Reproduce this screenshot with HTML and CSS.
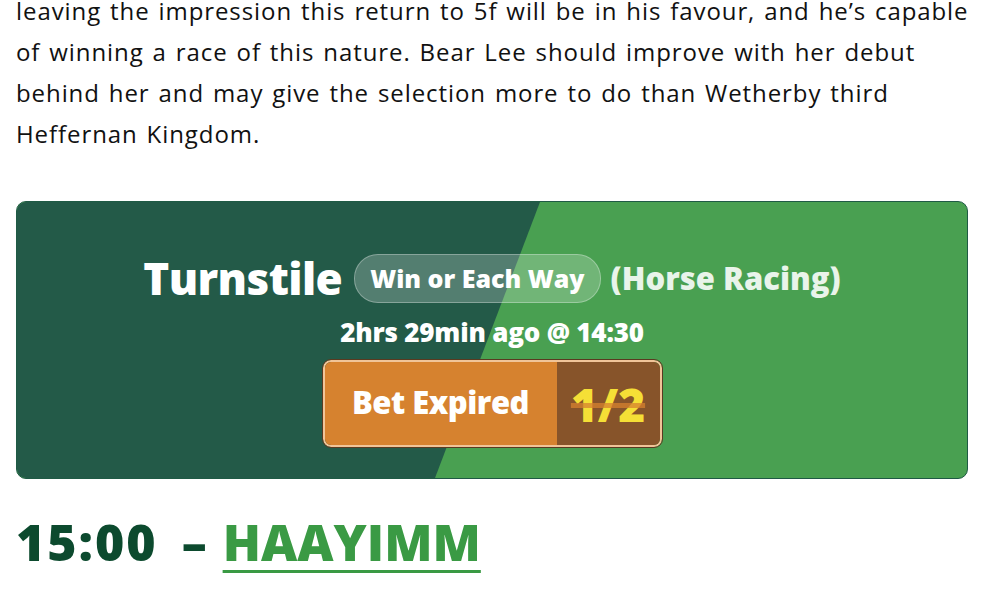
FILE: index.html
```html
<!DOCTYPE html>
<html>
<head>
<meta charset="UTF-8">
<title>15:00 - Haayimm</title>
<link rel="stylesheet" href="styles.css">
</head>
<body>
<div class="article">
	<p class="copy">leaving the impression this return to 5f will be in his favour, and he&rsquo;s capable<br>
	of winning a race of this nature. Bear Lee should improve with her debut<br>
	behind her and may give the selection more to do than Wetherby third<br>
	Heffernan Kingdom.</p>

	<!-- nap box -->
	<div class="tipbox">
		<div class="tip-title">
			<span class="horse">Turnstile</span>
			<span class="bettype">Win or Each Way</span>
			<span class="sport">(Horse Racing)</span>
		</div>
		<div class="tip-time">2hrs 29min ago @ 14:30</div>
		<div class="betbtn">
			<span class="bet-label">Bet Expired</span>
			<span class="bet-odds">1/2</span>
		</div>
	</div>

	<h2 class="race"><span class="race-time">15:00</span> &ndash; <a href="#" class="race-name">HAAYIMM</a></h2>
</div>
</body>
</html>
```

FILE: styles.css
```css
/* article page */
body {
	margin: 0;
	background: #fff;
	font-family: "Open Sans", "Noto Sans", sans-serif;
	color: #111;
	overflow: hidden;
}
.article {
	width: 952px;
	padding-left: 16px;
}
.copy {
	margin: -10px 0 0;
	font-size: 24px;
	line-height: 41px;
	letter-spacing: 0.92px;
	word-spacing: 1.8px;
	white-space: nowrap;
}

/* tip box : dark green on left, light green on right */
.tipbox {
	position: relative;
	margin-top: 47px;
	height: 278px;
	box-sizing: border-box;
	padding-top: 52px;
	background: #49a051;
	border: 1px solid #1f5a45;
	border-radius: 10px;
	overflow: hidden;
	display: flex;
	flex-direction: column;
	align-items: center;
	color: #fff;
	font-weight: 800;
}
.tipbox::before {
	content: "";
	position: absolute;
	top: 0; left: 0; right: 0; bottom: 0;
	background: #235a48;
	clip-path: polygon(0 0, 523px 0, 418px 100%, 0 100%);
}
.tip-title, .tip-time, .betbtn { position: relative; }

.tip-title {
	display: flex;
	align-items: center;
	height: 48px;
}
.horse {
	font-size: 44px;
	letter-spacing: -0.6px;
	margin-right: 12px;
}
.bettype {
	font-size: 25px;
	padding: 0 15px;
	height: 47px;
	line-height: 46px;
	border-radius: 24px;
	background: rgba(255,255,255,0.22);
	border: 1px solid rgba(255,255,255,0.3);
	margin-right: 10px;
}
.sport {
	font-size: 31px;
	color: #e9f4ea;
}
.tip-time {
	margin-top: 12px;
	font-size: 26px;
	letter-spacing: -0.2px;
}
.betbtn {
	margin-top: 10px;
	display: flex;
	width: 339px;
	height: 87px;
	box-sizing: border-box;
	border: 2px solid #f0c498;
	outline: 1px solid #5a3a20;
	border-radius: 8px;
	overflow: hidden;
}
.bet-label {
	flex: 1;
	background: #d6822f;
	font-size: 31px;
	letter-spacing: -0.5px;
	display: flex;
	align-items: center;
	justify-content: center;
	padding-bottom: 4px;
}
.bet-odds {
	width: 103px;
	background: #87542a;
	color: #f5df36;
	font-size: 46px;
	display: flex;
	align-items: center;
	justify-content: center;
	text-decoration: line-through;
	text-decoration-color: rgba(214,130,47,0.75);
	text-decoration-thickness: 5px;
}

/* race heading */
.race {
	margin: 29px 0 0;
	font-size: 50px;
	font-weight: 800;
	color: #0c4a2e;
	word-spacing: 3px;
}
.race-time {
	letter-spacing: 2px;
	margin-right: 8px;
}
.race-name {
	color: #3a9a44;
	text-decoration: underline;
	text-decoration-thickness: 3px;
	text-underline-offset: 9px;
}
```
